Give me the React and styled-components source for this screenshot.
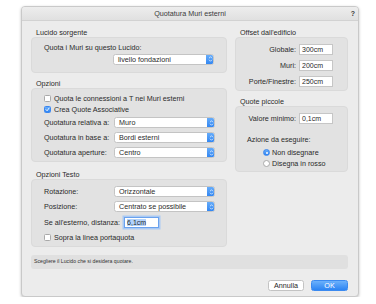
import React from "react";
import styled, { createGlobalStyle } from "styled-components";

const Global = createGlobalStyle`
  body {
    margin: 0;
    background: #ffffff;
    font-family: "Liberation Sans", Arial, sans-serif;
    color: #2a2a2a;
  }
`

const Janela = styled.div`
  box-sizing: border-box;
  margin: 6px 0 0 21px;
  width: 338px;
  height: 291px;
  background: #ececec;
  border: 1px solid #c9c9c9;
  border-radius: 4px;
  box-shadow: 0 1px 3px rgba(0, 0, 0, 0.25);
  display: flex;
  flex-direction: column;
  overflow: hidden;
`

const BarraTitulo = styled.div`
  height: 13px;
  display: grid;
  grid-template-columns: 1fr auto 1fr;
  align-items: center;
  background: linear-gradient(#ededed, #e0e0e0);
  border-bottom: 1px solid #d2d2d2;
  font-size: 7.2px;
  color: #3a3a3a;

  .ajuda {
    justify-self: end;
    padding-right: 3px;
    font-weight: bold;
    font-size: 7px;
  }
`

const Corpo = styled.div`
  padding: 7px 10px 0 9px;
  display: flex;
  flex-direction: column;
`

const Colunas = styled.div`
  display: grid;
  grid-template-columns: 196px 113px;
  column-gap: 8px;
  align-items: start;
`

const Coluna = styled.div`
  display: flex;
  flex-direction: column;
`

const Rotulo = styled.div`
  font-size: 7.2px;
  line-height: 9px;
  padding-left: 5px;
  margin-top: ${p => p.$topo || 0}px;
`

const Painel = styled.div`
  box-sizing: border-box;
  background: #e2e2e2;
  border: 1px solid #dadada;
  border-radius: 4px;
  padding: ${p => p.$pad};
  display: flex;
  flex-direction: column;
  font-size: 7.2px;
`

const Linha = styled.div`
  display: flex;
  align-items: center;
  height: ${p => p.$h || 11}px;
  margin-top: ${p => p.$topo || 0}px;
  padding-left: ${p => p.$recuo || 0}px;
  justify-content: ${p => p.$fim ? "flex-end" : "flex-start"};
`

const LinhaSelect = styled.div`
  display: grid;
  grid-template-columns: 70px 101px;
  align-items: center;
  height: 11px;
  margin-top: ${p => p.$topo || 0}px;
`

const Caixa = styled.div`
  box-sizing: border-box;
  width: 7px;
  height: 7px;
  margin-right: 3px;
  border-radius: 1.5px;
  border: 1px solid ${p => p.$on ? "#3a86f0" : "#a9a9a9"};
  background: ${p => p.$on ? "linear-gradient(#69adf9, #2f85f3)" : "#ffffff"};
  display: flex;
  align-items: center;
  justify-content: center;
`

const Radio = styled.div`
  box-sizing: border-box;
  width: 7px;
  height: 7px;
  margin-right: 2px;
  border-radius: 50%;
  border: 1px solid ${p => p.$on ? "#3a86f0" : "#a9a9a9"};
  background: ${p => p.$on ? "linear-gradient(#69adf9, #2f85f3)" : "#ffffff"};
  display: flex;
  align-items: center;
  justify-content: center;

  &::after {
    content: "";
    display: ${p => p.$on ? "block" : "none"};
    width: 2px;
    height: 2px;
    border-radius: 50%;
    background: #ffffff;
  }
`

const Select = styled.div`
  box-sizing: border-box;
  height: 11px;
  width: 101px;
  display: flex;
  align-items: center;
  background: #ffffff;
  border: 1px solid #c4c4c4;
  border-radius: 2.5px;
  font-size: 7.2px;
  padding-left: 4px;
  overflow: hidden;

  span {
    flex: 1;
  }
`

const Seta = styled.div`
  width: 8px;
  height: 11px;
  margin-right: -1px;
  background: linear-gradient(#6cb0fa, #2d83f2);
  border-radius: 0 2.5px 2.5px 0;
  display: flex;
  align-items: center;
  justify-content: center;
`

const Campo = styled.div`
  box-sizing: border-box;
  height: ${p => p.$h || 11}px;
  width: ${p => p.$w}px;
  background: #ffffff;
  border: 1px solid ${p => p.$foco ? "#6aa2ee" : "#c6c6c6"};
  box-shadow: ${p => p.$foco ? "0 0 0 1.5px #a9c9f3" : "none"};
  font-size: 7px;
  padding-left: 2px;
  display: flex;
  align-items: center;

  em {
    font-style: normal;
    background: ${p => p.$foco ? "#b3d3fb" : "transparent"};
  }
`

const Grade = styled.div`
  display: grid;
  grid-template-columns: 1fr 34px;
  column-gap: 3px;
  row-gap: 5px;
  align-items: center;
  padding-right: 14px;

  label {
    text-align: right;
  }
`

const Status = styled.div`
  margin-top: 8px;
  height: 14px;
  box-sizing: border-box;
  background: #e0e0e0;
  border-radius: 3px;
  font-size: 5.2px;
  padding: 3px 3px;
  color: #333;
`

const Botoes = styled.div`
  display: flex;
  justify-content: flex-end;
  gap: 7px;
  margin-top: 11px;
`

const Botao = styled.div`
  box-sizing: border-box;
  width: ${p => p.$w}px;
  height: 11px;
  border-radius: 2.5px;
  font-size: 7.2px;
  display: flex;
  align-items: center;
  justify-content: center;
  border: 1px solid ${p => p.$primario ? "#3b8af0" : "#c3c3c3"};
  background: ${p => p.$primario ? "linear-gradient(#6cb1fb, #2c84f3)" : "#ffffff"};
  color: ${p => p.$primario ? "#ffffff" : "#262626"};
`

const Visto = () => (
  <svg width="5" height="5" viewBox="0 0 10 10">
    <path d="M2 5.2 L4.2 7.6 L8 2.4" fill="none" stroke="#fff" strokeWidth="1.8" strokeLinecap="round" strokeLinejoin="round" />
  </svg>
)

const Escolha = ({ valor }) => (
  <Select>
    <span>{valor}</span>
    <Seta>
      <svg width="5" height="8" viewBox="0 0 10 16">
        <path d="M2.5 6 L5 3.5 L7.5 6 M2.5 10 L5 12.5 L7.5 10" fill="none" stroke="#fff" strokeWidth="1.4" strokeLinecap="round" strokeLinejoin="round" />
      </svg>
    </Seta>
  </Select>
)

const App = () => {
  return (
    <>
      <Global />
      <Janela>
        <BarraTitulo>
          <span />
          <span>Quotatura Muri esterni</span>
          <span className="ajuda">?</span>
        </BarraTitulo>
        <Corpo>
          <Colunas>
            <Coluna>
              <Rotulo>Lucido sorgente</Rotulo>
              <Painel $pad="4px 12px 5px 12px">
                <Linha>Quota i Muri su questo Lucido:</Linha>
                <Linha $topo={-2} $fim style={{ height: 16 }}>
                  <Escolha valor="livello fondazioni" />
                </Linha>
              </Painel>

              <Rotulo $topo={6}>Opzioni</Rotulo>
              <Painel $pad="4px 12px 3px 12px">
                <Linha><Caixa /> Quota le connessioni a T nei Muri esterni</Linha>
                <Linha><Caixa $on><Visto /></Caixa> Crea Quote Associative</Linha>
                <LinhaSelect $topo={2}>
                  <span>Quotatura relativa a:</span>
                  <Escolha valor="Muro" />
                </LinhaSelect>
                <LinhaSelect $topo={4}>
                  <span>Quotatura in base a:</span>
                  <Escolha valor="Bordi esterni" />
                </LinhaSelect>
                <LinhaSelect $topo={4}>
                  <span>Quotatura aperture:</span>
                  <Escolha valor="Centro" />
                </LinhaSelect>
              </Painel>

              <Rotulo $topo={8}>Opzioni Testo</Rotulo>
              <Painel $pad="6px 12px 3px 12px">
                <LinhaSelect>
                  <span>Rotazione:</span>
                  <Escolha valor="Orizzontale" />
                </LinhaSelect>
                <LinhaSelect $topo={4}>
                  <span>Posizione:</span>
                  <Escolha valor="Centrato se possibile" />
                </LinhaSelect>
                <Linha $topo={4} $h={12}>
                  <span style={{ marginRight: 4 }}>Se all'esterno, distanza:</span>
                  <Campo $w={35} $h={11} $foco><em>6,1cm</em></Campo>
                </Linha>
                <Linha $topo={4}><Caixa /> Sopra la linea portaquota</Linha>
              </Painel>
            </Coluna>

            <Coluna>
              <Rotulo>Offset dall'edificio</Rotulo>
              <Painel $pad="6px 0 3px 0">
                <Grade>
                  <label>Globale:</label>
                  <Campo $w={34}>300cm</Campo>
                  <label>Muri:</label>
                  <Campo $w={34}>200cm</Campo>
                  <label>Porte/Finestre:</label>
                  <Campo $w={34}>250cm</Campo>
                </Grade>
              </Painel>

              <Rotulo $topo={6}>Quote piccole</Rotulo>
              <Painel $pad="6px 0 2px 0">
                <Grade>
                  <label>Valore minimo:</label>
                  <Campo $w={34}>0,1cm</Campo>
                </Grade>
                <Linha $topo={10} $recuo={11}>Azione da eseguire:</Linha>
                <Linha $topo={2} $recuo={27}><Radio $on /> Non disegnare</Linha>
                <Linha $recuo={27}><Radio /> Disegna in rosso</Linha>
              </Painel>
            </Coluna>
          </Colunas>

          <Status>Scegliere il Lucido che si desidera quotare.</Status>

          <Botoes>
            <Botao $w={36}>Annulla</Botao>
            <Botao $w={37} $primario>OK</Botao>
          </Botoes>
        </Corpo>
      </Janela>
    </>
  )
}

export default App;
